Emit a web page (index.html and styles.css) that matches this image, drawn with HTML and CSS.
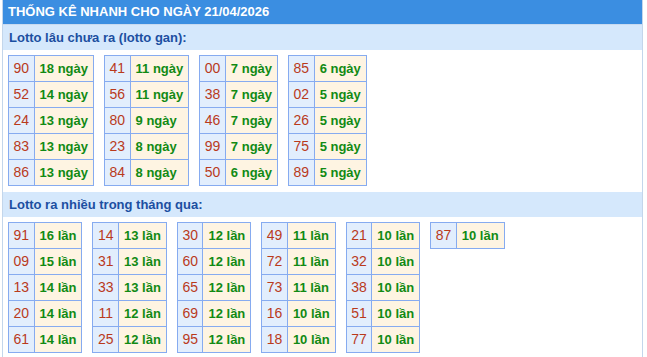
FILE: index.html
```html
<!DOCTYPE html>
<html lang="vi">
<head>
<meta charset="utf-8">
<title>Thống kê nhanh</title>
<link rel="stylesheet" href="styles.css">
</head>
<body>
<div class="box">
  <div class="title">THỐNG KÊ NHANH CHO NGÀY 21/04/2026</div>
  <div class="sub">Lotto lâu chưa ra (lotto gan):</div>
  <div class="tables">
    <table class="st"><tr><td class="n">90</td><td class="v">18 ngày</td></tr><tr><td class="n">52</td><td class="v">14 ngày</td></tr><tr><td class="n">24</td><td class="v">13 ngày</td></tr><tr><td class="n">83</td><td class="v">13 ngày</td></tr><tr><td class="n">86</td><td class="v">13 ngày</td></tr></table>
    <table class="st"><tr><td class="n">41</td><td class="v">11 ngày</td></tr><tr><td class="n">56</td><td class="v">11 ngày</td></tr><tr><td class="n">80</td><td class="v">9 ngày</td></tr><tr><td class="n">23</td><td class="v">8 ngày</td></tr><tr><td class="n">84</td><td class="v">8 ngày</td></tr></table>
    <table class="st"><tr><td class="n">00</td><td class="v">7 ngày</td></tr><tr><td class="n">38</td><td class="v">7 ngày</td></tr><tr><td class="n">46</td><td class="v">7 ngày</td></tr><tr><td class="n">99</td><td class="v">7 ngày</td></tr><tr><td class="n">50</td><td class="v">6 ngày</td></tr></table>
    <table class="st"><tr><td class="n">85</td><td class="v">6 ngày</td></tr><tr><td class="n">02</td><td class="v">5 ngày</td></tr><tr><td class="n">26</td><td class="v">5 ngày</td></tr><tr><td class="n">75</td><td class="v">5 ngày</td></tr><tr><td class="n">89</td><td class="v">5 ngày</td></tr></table>
  </div>
  <div class="sub">Lotto ra nhiều trong tháng qua:</div>
  <div class="tables">
    <table class="st"><tr><td class="n">91</td><td class="v">16 lần</td></tr><tr><td class="n">09</td><td class="v">15 lần</td></tr><tr><td class="n">13</td><td class="v">14 lần</td></tr><tr><td class="n">20</td><td class="v">14 lần</td></tr><tr><td class="n">61</td><td class="v">14 lần</td></tr></table>
    <table class="st"><tr><td class="n">14</td><td class="v">13 lần</td></tr><tr><td class="n">31</td><td class="v">13 lần</td></tr><tr><td class="n">33</td><td class="v">13 lần</td></tr><tr><td class="n">11</td><td class="v">12 lần</td></tr><tr><td class="n">25</td><td class="v">12 lần</td></tr></table>
    <table class="st"><tr><td class="n">30</td><td class="v">12 lần</td></tr><tr><td class="n">60</td><td class="v">12 lần</td></tr><tr><td class="n">65</td><td class="v">12 lần</td></tr><tr><td class="n">69</td><td class="v">12 lần</td></tr><tr><td class="n">95</td><td class="v">12 lần</td></tr></table>
    <table class="st"><tr><td class="n">49</td><td class="v">11 lần</td></tr><tr><td class="n">72</td><td class="v">11 lần</td></tr><tr><td class="n">73</td><td class="v">11 lần</td></tr><tr><td class="n">16</td><td class="v">10 lần</td></tr><tr><td class="n">18</td><td class="v">10 lần</td></tr></table>
    <table class="st"><tr><td class="n">21</td><td class="v">10 lần</td></tr><tr><td class="n">32</td><td class="v">10 lần</td></tr><tr><td class="n">38</td><td class="v">10 lần</td></tr><tr><td class="n">51</td><td class="v">10 lần</td></tr><tr><td class="n">77</td><td class="v">10 lần</td></tr></table>
    <table class="st"><tr><td class="n">87</td><td class="v">10 lần</td></tr></table>
  </div>
</div>
</body>
</html>
```
FILE: styles.css
```css
html, body {
  margin: 0;
  padding: 0;
  background: #ffffff;
}
body {
  font-family: "Liberation Sans", Arial, sans-serif;
  font-size: 13px;
}
.box {
  margin-left: 2px;
  width: 641px;
  min-height: 100vh;
  box-sizing: border-box;
  border-left: 1px solid #c3d6eb;
  border-right: 1px solid #c3d6eb;
}
.title {
  height: 24px;
  line-height: 24px;
  background: #3b8ee1;
  color: #ffffff;
  font-weight: bold;
  padding-left: 5px;
  border-bottom: 1px solid #c8daf0;
}
.sub {
  height: 25px;
  line-height: 25px;
  background: #d5e8fc;
  color: #1c4fa1;
  font-weight: bold;
  padding-left: 6px;
}
.tables {
  display: flex;
  flex-wrap: wrap;
  align-items: flex-start;
  gap: 10px;
  padding: 5px 5px 6px 5px;
}
.st {
  border-collapse: collapse;
}
.st td {
  border: 1px solid #86abf0;
  height: 25px;
  padding: 0 5px;
  line-height: 25px;
  white-space: nowrap;
  box-sizing: border-box;
}
.st .n {
  background: #e2eefd;
  color: #b93a1c;
  font-size: 14px;
  padding: 0 4.5px;
  text-align: center;
}
.st .v {
  background: #fef4e2;
  color: #118a14;
  font-weight: bold;
}
```
